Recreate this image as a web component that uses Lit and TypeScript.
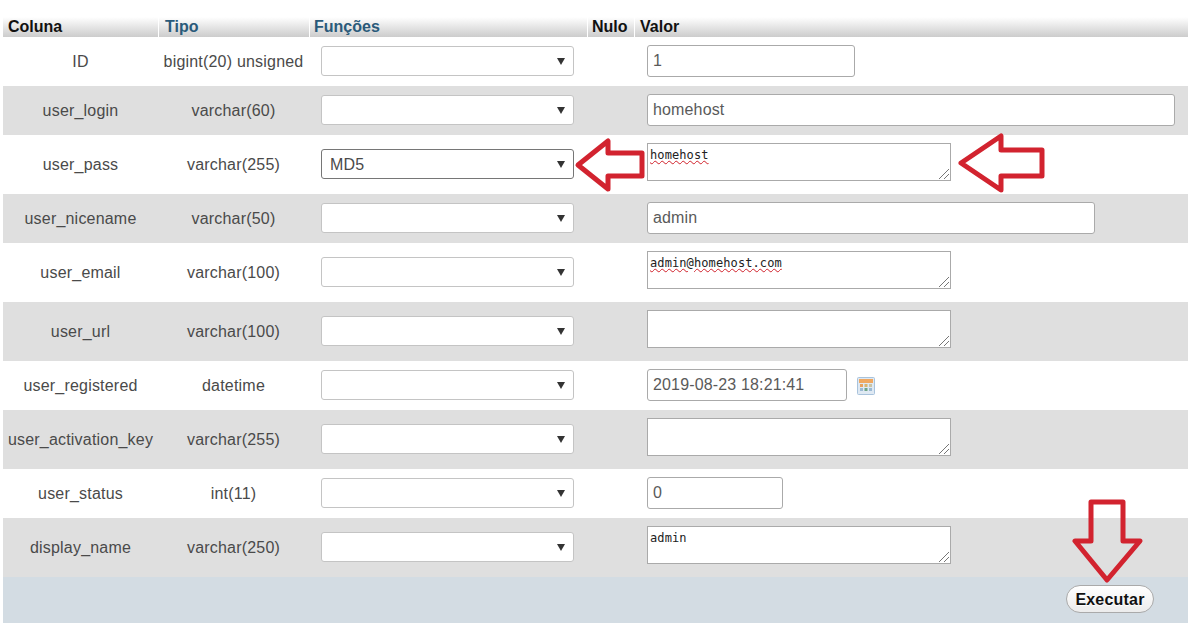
import { LitElement, html, css, svg } from "lit";
import { customElement } from "lit/decorators.js";

type Row = {
  name: string;
  type: string;
  fn?: string;
  kind: "input" | "area" | "date";
  value: string;
  width?: number;
  spell?: boolean;
};

const ROWS: Row[] = [
  { name: "ID", type: "bigint(20) unsigned", kind: "input", value: "1", width: 208 },
  { name: "user_login", type: "varchar(60)", kind: "input", value: "homehost", width: 528 },
  { name: "user_pass", type: "varchar(255)", fn: "MD5", kind: "area", value: "homehost", spell: true },
  { name: "user_nicename", type: "varchar(50)", kind: "input", value: "admin", width: 448 },
  { name: "user_email", type: "varchar(100)", kind: "area", value: "admin@homehost.com", spell: true },
  { name: "user_url", type: "varchar(100)", kind: "area", value: "" },
  { name: "user_registered", type: "datetime", kind: "date", value: "2019-08-23 18:21:41", width: 200 },
  { name: "user_activation_key", type: "varchar(255)", kind: "area", value: "" },
  { name: "user_status", type: "int(11)", kind: "input", value: "0", width: 136 },
  { name: "display_name", type: "varchar(250)", kind: "area", value: "admin" },
];

@customElement("app-root")
export class AppRoot extends LitElement {
  static styles = css`
    :host {
      display: block;
      box-sizing: border-box;
      width: 1198px;
      height: 631px;
      padding: 17px 0 0 3px;
      position: relative;
      background: #fff;
      font-family: "Liberation Sans", Arial, sans-serif;
      font-size: 16px;
      color: #4a4a4a;
      overflow: hidden;
    }
    .table {
      width: 1185px;
    }
    .row,
    .head {
      display: grid;
      grid-template-columns: 155px 151px 278px 47px 554px;
    }
    .head {
      height: 20px;
      background: linear-gradient(#fff, #ccc);
      font-weight: bold;
      line-height: 19px;
      color: #111;
    }
    .head div {
      padding-left: 4px;
      border-left: 1px solid #fff;
    }
    .head div:first-child {
      border-left: 0;
      padding-left: 5px;
    }
    .head .link {
      color: #2a5a7a;
    }
    .head .tipo,
    .head .valor {
      padding-left: 5px;
    }
    .head .tipo {
      padding-left: 6px;
    }
    .row {
      align-items: center;
      padding: 8px 0 9px;
    }
    .row:nth-child(even) {
      background: #dfdfdf;
    }
    .label {
      text-align: center;
      padding-top: 2px;
      letter-spacing: 0.2px;
    }
    .fn {
      padding-left: 12px;
    }
    .select {
      position: relative;
      width: 253px;
      height: 30px;
    }
    select {
      appearance: none;
      -webkit-appearance: none;
      box-sizing: border-box;
      display: block;
      width: 100%;
      height: 100%;
      margin: 0;
      padding: 0 8px;
      background: #fff;
      border: 1px solid #c4c4c4;
      border-radius: 3px;
      font: inherit;
      letter-spacing: 0.15px;
      color: #4a4a4a;
    }
    select.chosen {
      border-color: #767676;
    }
    .caret {
      position: absolute;
      right: 9px;
      top: 11px;
      width: 8px;
      height: 8px;
      pointer-events: none;
    }
    .value {
      grid-column: 5;
      padding-left: 13px;
      display: flex;
      align-items: center;
    }
    input {
      box-sizing: border-box;
      height: 32px;
      margin: 0;
      padding: 0 5px;
      background: #fff;
      border: 1px solid #aaa;
      border-radius: 3px;
      font: inherit;
      letter-spacing: 0.15px;
      color: #5a5a5a;
    }
    .area {
      position: relative;
      box-sizing: border-box;
      width: 304px;
      height: 38px;
      margin-bottom: 4px;
      padding: 4px 2px 0;
      background: #fff;
      border: 1px solid #aaa;
      font-family: "DejaVu Sans Mono", "Liberation Mono", monospace;
      font-size: 12px;
      letter-spacing: 0.1px;
      line-height: 15px;
      color: #222;
    }
    .spell {
      text-decoration: underline wavy #d0202a 1px;
      text-underline-offset: 1px;
    }
    .grip {
      position: absolute;
      right: 0;
      bottom: 0;
      width: 12px;
      height: 12px;
    }
    .cal {
      width: 18px;
      height: 18px;
      margin: 1px 0 0 10px;
    }
    .foot {
      height: 46px;
      background: #d3dce3;
      display: flex;
      justify-content: flex-end;
      align-items: flex-start;
      padding: 8px 34px 0 0;
      box-sizing: border-box;
    }
    button {
      box-sizing: border-box;
      width: 88px;
      height: 28px;
      padding: 1px 0 0;
      border: 1px solid #aaa;
      border-radius: 14px;
      background: linear-gradient(#fff, #ececec);
      font: bold 16px "Liberation Sans", Arial, sans-serif;
      letter-spacing: 0.2px;
      color: #111;
      text-shadow: 0 1px 0 #fff;
    }
    .marks {
      position: absolute;
      left: 0;
      top: 0;
      width: 1198px;
      height: 631px;
      pointer-events: none;
    }
    .marks polygon {
      fill: none;
      stroke: #d2232f;
      stroke-width: 5;
      stroke-linejoin: round;
    }
  `;

  private grip() {
    return html`<svg class="grip" viewBox="0 0 12 12" aria-hidden="true">
      <path d="M1 11 L11 1 M6 11 L11 6" fill="none" stroke="#777" stroke-width="1" />
    </svg>`;
  }

  private calendar() {
    return html`<svg class="cal" viewBox="0 0 18 18" aria-hidden="true">
      <rect x="0.5" y="0.5" width="17" height="17" rx="1" fill="#dfe9f3" stroke="#a9c3dc" />
      <rect x="2" y="2" width="14" height="4" fill="#f0a860" />
      <rect x="3" y="7" width="3" height="3" fill="#e8a25e" />
      <rect x="7.5" y="7" width="3" height="3" fill="#d9b36f" />
      <rect x="12" y="7" width="3" height="3" fill="#c9c4a6" />
      <rect x="3" y="11" width="3" height="3" fill="#9bb9d4" />
      <rect x="7.5" y="11" width="3" height="3" fill="#6fa588" />
      <rect x="12" y="11" width="3" height="3" fill="#9bb9d4" />
    </svg>`;
  }

  private valueCell(r: Row) {
    if (r.kind === "area") {
      return html`<div class="area">
        <span class=${r.spell ? "spell" : ""}>${r.value}</span>${this.grip()}
      </div>`;
    }
    return html`<input type="text" .value=${r.value} style="width:${r.width}px" />${r.kind === "date"
        ? this.calendar()
        : ""}`;
  }

  render() {
    return html`
      <div class="table">
        <div class="head">
          <div>Coluna</div>
          <div class="link tipo">Tipo</div>
          <div class="link">Funções</div>
          <div>Nulo</div>
          <div class="valor">Valor</div>
        </div>
        <div class="rows">
          ${ROWS.map(
            (r) => html`<div class="row">
              <div class="label">${r.name}</div>
              <div class="label">${r.type}</div>
              <div class="fn">
                <div class="select">
                  <select class=${r.fn ? "chosen" : ""}>
                    <option>${r.fn ?? ""}</option>
                  </select>
                  <svg class="caret" viewBox="0 0 8 8" aria-hidden="true">
                    <path d="M0 1 H8 L4 8 Z" fill="#333" />
                  </svg>
                </div>
              </div>
              <div class="value">${this.valueCell(r)}</div>
            </div>`
          )}
        </div>
        <div class="foot"><button>Executar</button></div>
      </div>
      <svg class="marks" viewBox="0 0 1198 631" aria-hidden="true">
        ${svg`
          <polygon points="578,165 608,141 608,153 642,153 642,176 608,176 608,189" />
          <polygon points="961,163 1001,136 1001,150 1042,150 1042,176 1001,176 1001,190" />
          <polygon points="1091,502 1123,502 1123,541 1140,541 1107,580 1075,541 1091,541" />
        `}
      </svg>
    `;
  }
}
